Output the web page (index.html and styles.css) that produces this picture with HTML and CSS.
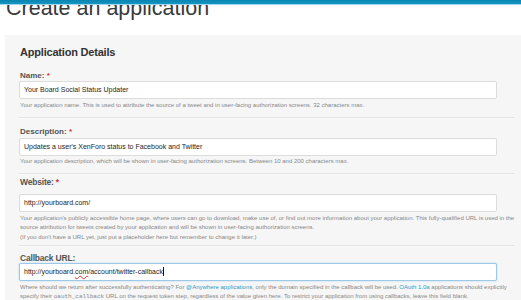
FILE: index.html
```html
<!DOCTYPE html>
<html lang="en">
<head>
<meta charset="utf-8">
<title>Create an application</title>
<link rel="stylesheet" href="styles.css">
</head>
<body>
<div class="topbar"></div>
<h1 class="page-title">Create an application</h1>
<form class="panel">
  <h2 class="panel-title">Application Details</h2>

  <div class="field">
    <label class="field-label">Name: <span class="req">*</span></label>
    <div class="input">Your Board Social Status Updater</div>
    <p class="help">Your application name. This is used to attribute the source of a tweet and in user-facing authorization screens. 32 characters max.</p>
  </div>
  <hr class="divider">

  <div class="field">
    <label class="field-label">Description: <span class="req">*</span></label>
    <div class="input">Updates a user's XenForo status to Facebook and Twitter</div>
    <p class="help">Your application description, which will be shown in user-facing authorization screens. Between 10 and 200 characters max.</p>
  </div>
  <hr class="divider">

  <div class="field field-website">
    <label class="field-label field-label-lg">Website: <span class="req">*</span></label>
    <div class="input">http://yourboard.com/</div>
    <p class="help">Your application's publicly accessible home page, where users can go to download, make use of, or find out more information about your application. This fully-qualified URL is used in the<br>source attribution for tweets created by your application and will be shown in user-facing authorization screens.<br>(If you don't have a URL yet, just put a placeholder here but remember to change it later.)</p>
  </div>
  <hr class="divider divider-tight">

  <div class="field field-callback">
    <label class="field-label field-label-lg">Callback URL:</label>
    <div class="input input-focus">http://yourboard.<span class="spell">com</span>/account/twitter-callback<span class="caret"></span></div>
    <p class="help">Where should we return after successfully authenticating? For <a class="link" href="#">@Anywhere applications</a>, only the domain specified in the callback will be used. <a class="link" href="#">OAuth 1.0a</a> applications should explicitly<br>specify their <code class="mono">oauth_callback</code> URL on the request token step, regardless of the value given here. To restrict your application from using callbacks, leave this field blank.</p>
  </div>
</form>
</body>
</html>
```

FILE: styles.css
```css
html, body {
  margin: 0;
  padding: 0;
  background: #fff;
  overflow: hidden;
  font-family: "Liberation Sans", Arial, sans-serif;
}

.topbar {
  position: fixed;
  top: 0;
  left: 0;
  right: 0;
  height: 4px;
  background: linear-gradient(#0a84b1, #1396c3);
  border-bottom: 1px solid #9fd6ea;
  z-index: 5;
}

.page-title {
  margin: -3px 0 0 6px;
  font-size: 21.5px;
  line-height: 22px;
  font-weight: normal;
  color: #3a3a3a;
}

.panel {
  margin: 16px 0 0 5px;
  padding: 10.5px 0 20px 14px;
  background: #f6f6f6;
}

.panel-title {
  margin: 0 0 12px 1px;
  font-size: 11px;
  line-height: 13px;
  letter-spacing: -0.2px;
  font-weight: bold;
  color: #333;
}

.field {
  display: flex;
  flex-direction: column;
}

.field-label {
  display: block;
  margin: 0 0 1.5px 1px;
  font-size: 8px;
  line-height: 9px;
  font-weight: bold;
  color: #555;
}

.field-label-lg {
  font-size: 8.5px;
  letter-spacing: -0.2px;
}

.field-website .field-label {
  margin-bottom: 7.5px;
}

.field-callback .field-label {
  margin-bottom: 0.5px;
}

.req {
  color: #d03030;
}

.input {
  box-sizing: border-box;
  width: 478px;
  height: 18px;
  padding: 0 4px;
  background: #fff;
  border: 1px solid #dcdcdc;
  border-radius: 2px;
  font-size: 7px;
  line-height: 16px;
  color: #1e1e1e;
  white-space: nowrap;
}

.input-focus {
  border-color: #9cc9e6;
  box-shadow: 0 0 2px rgba(82, 168, 236, 0.45);
}

.spell {
  text-decoration: underline wavy #e03030;
  text-decoration-thickness: 0.5px;
  text-underline-offset: 1px;
}

.caret {
  display: inline-block;
  width: 1px;
  height: 9px;
  margin-left: 0.5px;
  vertical-align: -2px;
  background: #111;
}

.help {
  margin: 1.5px 0 0 1px;
  font-size: 6px;
  line-height: 9.5px;
  color: #878787;
  white-space: nowrap;
}

.link {
  color: #2a9cc9;
  text-decoration: none;
}

.mono {
  font-family: "Liberation Mono", monospace;
  font-size: 6px;
  color: #878787;
}

.divider {
  width: 495px;
  height: 0;
  margin: 6.5px 0 8.5px 0;
  border: 0;
  border-top: 1px solid #e3e3e3;
  border-bottom: 1px solid #fbfbfb;
}

.divider-tight {
  margin-top: 2.5px;
  margin-bottom: 7px;
}

.field-website {
  margin-top: -6px;
}
```
